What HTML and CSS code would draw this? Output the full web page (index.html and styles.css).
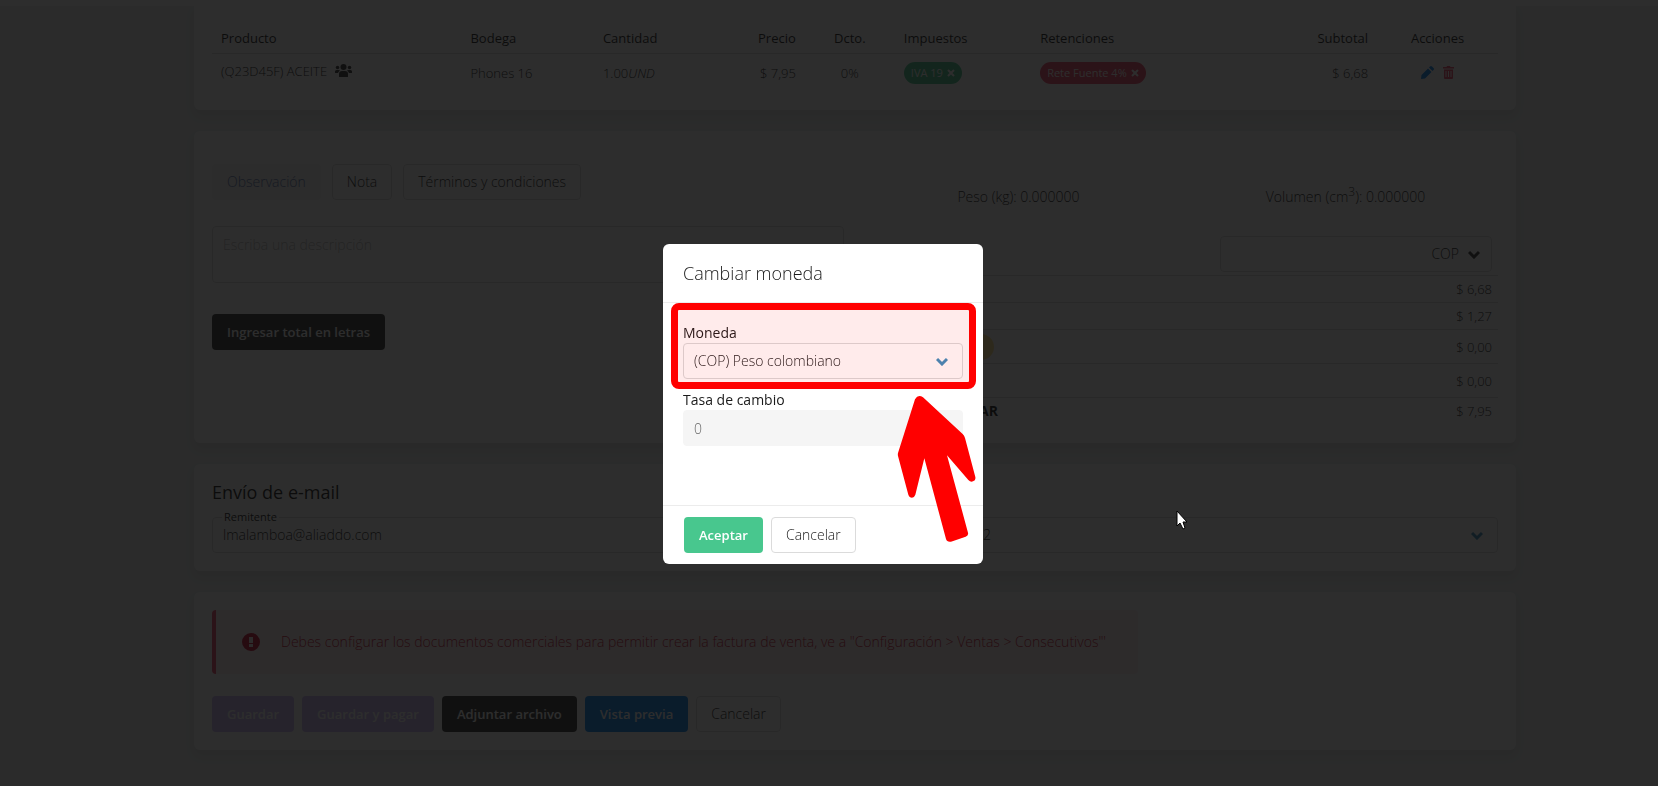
FILE: index.html
```html
<!DOCTYPE html>
<html lang="es">

<head>
    <meta charset="UTF-8">
    <meta name="viewport" content="width=device-width, initial-scale=1.0">
    <title>Factura de venta</title>
    <link rel="stylesheet" href="styles.css">
</head>

<body>
    <div class="topbar"></div>
    <main class="page">
        <section class="card card-items">
            <table class="items">
                <colgroup>
                    <col class="col-product">
                    <col class="col-store">
                    <col class="col-qty">
                    <col class="col-price">
                    <col class="col-discount">
                    <col class="col-taxes">
                    <col class="col-retentions">
                    <col class="col-subtotal">
                    <col class="col-actions">
                </colgroup>
                <thead>
                    <tr>
                        <th>Producto</th>
                        <th>Bodega</th>
                        <th>Cantidad</th>
                        <th class="right">Precio</th>
                        <th class="center">Dcto.</th>
                        <th>Impuestos</th>
                        <th>Retenciones</th>
                        <th class="right">Subtotal</th>
                        <th class="center">Acciones</th>
                    </tr>
                </thead>
                <tbody>
                    <tr>
                        <td>
                            <div class="product">
                                <span>(Q23D45F) ACEITE</span>
                                <svg width="17" height="13" viewBox="0 0 34 26">
                                    <circle cx="17" cy="6" r="6" />
                                    <circle cx="5" cy="7" r="3.5" />
                                    <circle cx="29" cy="7" r="3.5" />
                                    <path d="M8 25v-5q0-6 6-6h6q6 0 6 6v5q0 1-1 1H9q-1 0-1-1z" />
                                    <path d="M0 17v-2q0-3 3-3h4q2 0 3 1-3 2-4 5H1q-1 0-1-1z" />
                                    <path d="M34 17v-2q0-3-3-3h-4q-2 0-3 1 3 2 4 5h5q1 0 1-1z" />
                                </svg>
                            </div>
                        </td>
                        <td>Phones 16</td>
                        <td>1.00<em>UND</em></td>
                        <td class="right">$ 7,95</td>
                        <td class="center">0%</td>
                        <td>
                            <span class="tag tag-success">IVA 19
                                <button type="button" class="tag-delete" aria-label="Quitar IVA 19">
                                    <svg width="8" height="8" viewBox="0 0 8 8"><path d="M1 1l6 6M7 1L1 7" /></svg>
                                </button>
                            </span>
                        </td>
                        <td>
                            <span class="tag tag-danger">Rete Fuente 4%
                                <button type="button" class="tag-delete" aria-label="Quitar Rete Fuente">
                                    <svg width="8" height="8" viewBox="0 0 8 8"><path d="M1 1l6 6M7 1L1 7" /></svg>
                                </button>
                            </span>
                        </td>
                        <td class="right">$ 6,68</td>
                        <td>
                            <div class="actions">
                                <button type="button" class="icon-button edit" aria-label="Editar">
                                    <svg width="13" height="13" viewBox="0 0 26 26">
                                        <path d="M0 26l1-8L14 5l7 7L8 25z M16 3l2-2q2-2 4 0l3 3q2 2 0 4l-2 2z" />
                                    </svg>
                                </button>
                                <button type="button" class="icon-button remove" aria-label="Eliminar">
                                    <svg width="11" height="13" viewBox="0 0 22 26">
                                        <path fill-rule="evenodd" d="M0 2h7l1-2h6l1 2h7v3H0z M2 7h18v17q0 2-2 2H4q-2 0-2-2z M5 10v12h2V10z M10 10v12h2V10z M15 10v12h2V10z" />
                                    </svg>
                                </button>
                            </div>
                        </td>
                    </tr>
                </tbody>
            </table>
        </section>

        <section class="card card-totals">
            <div class="notes">
                <div class="tabs">
                    <button type="button" class="button tab-active">Observación</button>
                    <button type="button" class="button">Nota</button>
                    <button type="button" class="button">Términos y condiciones</button>
                </div>
                <textarea class="textarea" aria-label="Observación" placeholder="Escriba una descripción"></textarea>
                <button type="button" class="button button-dark">Ingresar total en letras</button>
            </div>
            <div class="summary">
                <div class="measures">
                    <span>Peso (kg): 0.000000</span>
                    <span>Volumen (cm<sup>3</sup>): 0.000000</span>
                </div>
                <div class="select currency">
                    <select aria-label="Moneda del documento">
                        <option>COP</option>
                    </select>
                    <svg class="chevron" width="12" height="9" viewBox="0 0 12 9"><path d="M1 2l5 5 5-5" /></svg>
                </div>
                <table class="totals">
                    <tr>
                        <th>Subtotal</th>
                        <td>$ 6,68</td>
                    </tr>
                    <tr>
                        <th>Impuestos</th>
                        <td>$ 1,27</td>
                    </tr>
                    <tr class="tall">
                        <th class="discount"><span class="tag tag-warning">Descuento</span></th>
                        <td>$ 0,00</td>
                    </tr>
                    <tr class="tall">
                        <th>Retenciones</th>
                        <td>$ 0,00</td>
                    </tr>
                    <tr>
                        <th class="grand-total">TOTAL A PAGAR</th>
                        <td>$ 7,95</td>
                    </tr>
                </table>
            </div>
        </section>

        <section class="card card-email">
            <h2>Envío de e-mail</h2>
            <div class="email-fields">
                <div class="field">
                    <label class="floating" for="sender">Remitente</label>
                    <input class="input" id="sender" type="text" value="lmalamboa@aliaddo.com">
                </div>
                <div class="select template">
                    <select aria-label="Plantilla">
                        <option>2</option>
                    </select>
                    <svg class="chevron" width="12" height="9" viewBox="0 0 12 9"><path d="M1 2l5 5 5-5" /></svg>
                </div>
            </div>
        </section>

        <section class="card card-save">
            <div class="notification">
                <svg width="18" height="18" viewBox="0 0 18 18">
                    <path fill-rule="evenodd" d="M9 0a9 9 0 1 1 0 18A9 9 0 0 1 9 0z M7 4v6h4V4z M7 11v3h4v-3z" />
                </svg>
                <p>Debes configurar los documentos comerciales para permitir crear la factura de venta, ve a "Configuración &gt; Ventas &gt; Consecutivos"'</p>
            </div>
            <div class="buttons">
                <button type="button" class="button button-muted">Guardar</button>
                <button type="button" class="button button-muted">Guardar y pagar</button>
                <button type="button" class="button button-dark">Adjuntar archivo</button>
                <button type="button" class="button button-info">Vista previa</button>
                <button type="button" class="button">Cancelar</button>
            </div>
        </section>
    </main>

    <div class="overlay">
        <div class="modal" role="dialog" aria-labelledby="modal-title">
            <header class="modal-head">
                <h1 id="modal-title">Cambiar moneda</h1>
            </header>
            <div class="modal-body">
                <label for="currency">Moneda</label>
                <div class="select">
                    <select id="currency">
                        <option>(COP) Peso colombiano</option>
                    </select>
                    <svg class="chevron" width="12" height="9" viewBox="0 0 12 9"><path d="M1 2l5 5 5-5" /></svg>
                </div>
                <label class="rate-label" for="rate">Tasa de cambio</label>
                <input class="input" id="rate" type="text" value="0" disabled>
            </div>
            <footer class="modal-foot">
                <button type="button" class="button button-success">Aceptar</button>
                <button type="button" class="button">Cancelar</button>
            </footer>

            <!-- highlight and arrow over the currency field -->
            <div class="highlight"></div>
            <svg class="arrow" width="80" height="148" viewBox="742 496 240 444">
                <path d="M796 509Q805 493 820 503L939 613Q944 618 946 625L977 742Q979 752 970 755Q963 758 956 751L892 677L955 909Q957 918 948 921L904 936Q892 938 889 928L824 686L797 795Q794 804 787 804Q779 804 776 795L745 679Q744 675 745 670Z" />
            </svg>
        </div>
        <svg class="cursor" width="12" height="20" viewBox="0 0 12 20">
            <path d="M1 1v15l3-3 3 6 2-1-2-6h4z" />
        </svg>
    </div>
</body>

</html>
```
FILE: styles.css
```css
* {
    box-sizing: border-box;
}

body {
    margin: 0;
    min-height: 100vh;
    background: #ecefee;
    color: #1a1a1a;
    font-family: "Open Sans", "Noto Sans", sans-serif;
    font-size: 14px;
    font-weight: 300;
    line-height: 20px;
    overflow: hidden;
}

button,
input,
select,
textarea {
    font: inherit;
    color: inherit;
}

.topbar {
    height: 6px;
    background: #fff;
}

.page {
    display: flex;
    flex-direction: column;
    gap: 21px;
    padding: 0 142px 36px 194px;
}

.card {
    padding: 18px;
    background: #fff;
    border-radius: 6px;
    box-shadow: 0 6px 10px rgba(60, 30, 30, 0.08);
}

/* product table */
.card-items {
    border-radius: 0 0 6px 6px;
}

table {
    width: 100%;
    border-collapse: collapse;
}

.items {
    table-layout: fixed;
    font-size: 13px;
    line-height: 18px;
}

.items th,
.items td {
    padding: 0 9px;
    text-align: left;
    white-space: nowrap;
}

.items th {
    height: 29px;
    font-weight: 500;
    border-bottom: 1px solid #dbdbdb;
}

.items td {
    height: 39px;
}

.items .right {
    text-align: right;
}

.items .center {
    text-align: center;
}

.col-product { width: 19.4%; }
.col-store { width: 10.3%; }
.col-qty { width: 10.3%; }
.col-price { width: 6.1%; }
.col-discount { width: 7%; }
.col-taxes { width: 10.6%; }
.col-retentions { width: 17%; }
.col-subtotal { width: 9.9%; }
.col-actions { width: 9.4%; }

.product {
    display: flex;
    align-items: center;
    gap: 8px;
    padding-bottom: 4px;
}

.product svg {
    fill: #363636;
}

.actions {
    display: flex;
    justify-content: center;
    gap: 9px;
}

.icon-button {
    display: flex;
    padding: 0;
    border: 0;
    background: none;
}

.edit svg {
    fill: #0a84f0;
}

.remove svg {
    fill: #f14668;
}

.tag {
    display: inline-flex;
    align-items: center;
    gap: 4px;
    height: 22px;
    padding: 0 7px;
    border-radius: 11px;
    color: #fff;
    font-size: 11px;
    font-weight: 400;
}

.tag-success {
    background: #48c78e;
}

.tag-danger {
    background: #f14668;
}

.tag-warning {
    height: 26px;
    padding: 0 12px;
    border-radius: 13px;
    background: #ffe08a;
    font-size: 12px;
}

.tag-delete {
    display: flex;
    padding: 0;
    border: 0;
    background: none;
}

.tag-delete svg {
    fill: none;
    stroke: #fff;
    stroke-width: 2;
}

/* controls */
.button {
    height: 36px;
    padding: 0 14px;
    background: #fff;
    border: 1px solid #dbdbdb;
    border-radius: 4px;
    white-space: nowrap;
}

.tab-active {
    background: #f5f5f5;
    border-color: #f5f5f5;
    color: #5f78b0;
}

.button-dark,
.button-muted,
.button-info,
.button-success {
    border-color: transparent;
    background-clip: border-box;
    color: #fff;
    font-size: 13px;
    font-weight: 600;
}

.button-dark {
    background: #363636;
}

.button-muted {
    background: #cbb8f5;
}

.button-info {
    background: #0a84f0;
}

.button-success {
    background: #48c78e;
}

.input,
.textarea,
.select select {
    display: block;
    width: 100%;
    height: 36px;
    margin: 0;
    padding: 0 10px;
    background: transparent;
    border: 1px solid #dbdbdb;
    border-radius: 4px;
}

.input:disabled {
    background: #f5f5f5;
    border-color: #f5f5f5;
    color: #666;
}

.textarea {
    height: 57px;
    padding: 8px 10px;
    resize: none;
}

.textarea::placeholder {
    color: #b8b8b8;
}

.select {
    position: relative;
}

.select select {
    appearance: none;
}

.chevron {
    position: absolute;
    top: 14px;
    right: 15px;
    fill: none;
    stroke: #3e8ebd;
    stroke-width: 3;
    pointer-events: none;
}

/* notes and totals */
.card-totals {
    display: grid;
    grid-template-columns: 1fr 1fr;
    gap: 22px;
}

.notes {
    display: flex;
    flex-direction: column;
    align-items: flex-start;
    padding-top: 15px;
}

.tabs {
    display: flex;
    gap: 11px;
    margin-bottom: 26px;
}

.textarea {
    margin-bottom: 31px;
}

.measures {
    display: grid;
    grid-template-columns: 1fr 1fr;
    height: 87px;
    margin: 0 -11px;
    padding-top: 38px;
    text-align: center;
}

.measures sup {
    font-size: 12px;
    line-height: 10px;
}

.currency {
    width: 43%;
    margin: 0 6px 3px auto;
}

.currency select {
    padding-right: 32px;
    text-align: right;
    text-align-last: right;
}

.currency .chevron {
    right: 12px;
    stroke: #363636;
}

.totals {
    font-size: 13px;
    line-height: 18px;
}

.totals th,
.totals td {
    height: 27px;
    padding: 0 6px;
    border-top: 1px solid #dbdbdb;
    text-align: right;
}

.totals th {
    width: 132px;
    font-weight: 400;
    text-align: left;
}

.totals .tall th,
.totals .tall td {
    height: 34px;
}

.totals .discount {
    padding-right: 4px;
    text-align: right;
}

.totals .grand-total {
    padding: 0;
    font-size: 14px;
    font-weight: 700;
    text-align: right;
    white-space: nowrap;
}

/* e-mail */
h1,
h2 {
    margin: 0;
}

h2 {
    margin-bottom: 15px;
    font-size: 18px;
    font-weight: 400;
    line-height: 20px;
}

.email-fields {
    display: grid;
    grid-template-columns: 1fr 1fr;
    gap: 22px;
}

.field {
    position: relative;
}

.floating {
    position: absolute;
    top: -8px;
    left: 10px;
    padding: 0 2px;
    background: #fff;
    font-size: 11px;
    font-weight: 400;
    line-height: 16px;
}

.template select {
    padding-left: 116px;
}

/* save bar */
.notification {
    display: flex;
    align-items: center;
    gap: 21px;
    width: fit-content;
    min-height: 64px;
    margin-bottom: 22px;
    padding: 0 32px 0 26px;
    background: #feecf0;
    border-left: 4px solid #f14668;
    border-radius: 4px;
    color: #cc0f35;
}

.notification svg {
    flex: none;
    fill: #cc0f35;
}

.notification p {
    margin: 0;
}

.buttons,
.modal-foot {
    display: flex;
    gap: 8px;
}

/* modal */
.overlay {
    position: fixed;
    inset: 0;
    display: flex;
    align-items: center;
    justify-content: center;
    padding: 22px 12px 0 0;
    background: rgba(10, 10, 10, 0.86);
}

.modal {
    position: relative;
    width: 320px;
    background: #fff;
    border-radius: 6px;
}

.modal-head {
    padding: 17px 20px;
    border-bottom: 1px solid #ececec;
}

.modal-head h1 {
    font-size: 18px;
    font-weight: 300;
    line-height: 24px;
}

.modal-body {
    min-height: 202px;
    padding: 19px 20px 0;
}

.modal-body label {
    display: block;
    font-weight: 500;
    line-height: 21px;
}

.modal-body .rate-label {
    margin-top: 10px;
}

.modal-foot {
    padding: 11px 21px;
    border-top: 1px solid #ececec;
}

.highlight {
    position: absolute;
    top: 59px;
    left: 8px;
    width: 305px;
    height: 86px;
    background: rgba(255, 0, 0, 0.08);
    border: 7px solid #f00;
    border-radius: 8px;
    pointer-events: none;
}

.arrow {
    position: absolute;
    top: 151px;
    left: 234px;
    fill: #f00;
    pointer-events: none;
}

.cursor {
    position: absolute;
    top: 510px;
    left: 1176px;
    fill: #fff;
    stroke: #000;
    pointer-events: none;
}
```
